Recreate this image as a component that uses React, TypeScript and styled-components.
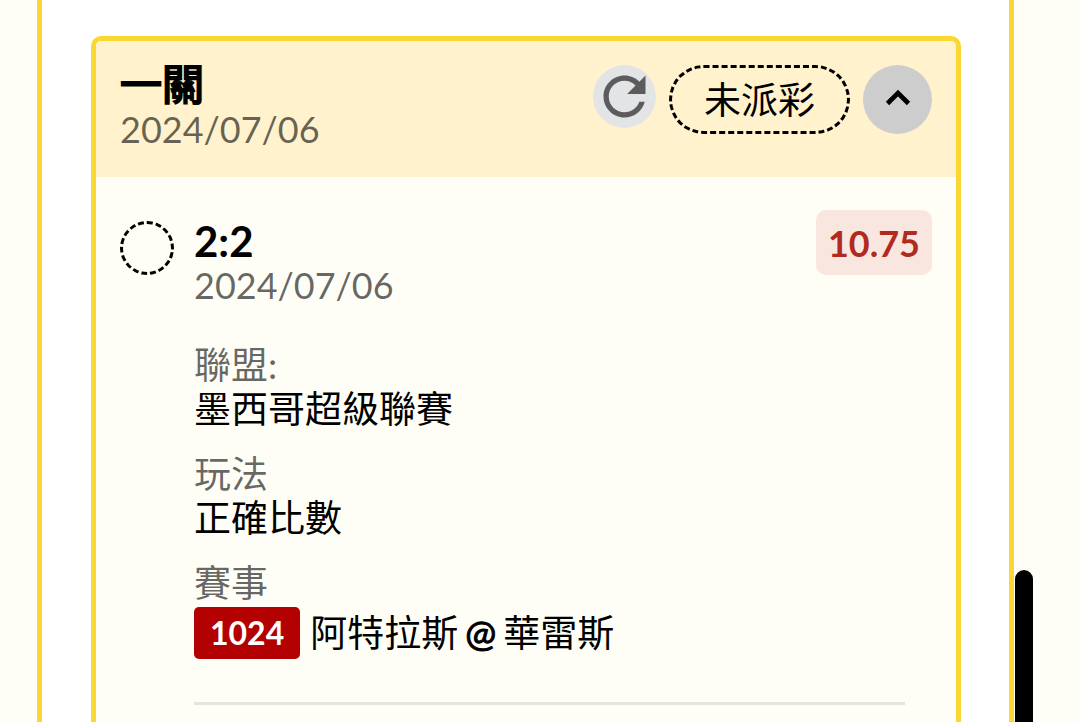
import React, { useState } from 'react';
import styled, { createGlobalStyle } from 'styled-components';

const GlobalStyle = createGlobalStyle`
  *, *::before, *::after { box-sizing: border-box; }
  body {
    margin: 0;
    background: #fffef6;
    color: #000;
    font-family: Lato, "Noto Sans CJK TC", sans-serif;
    font-size: 37px;
    line-height: 44px;
  }
`;

const Page = styled.div`
  display: flex;
  min-height: 100vh;
  padding: 0 66px 0 37px;
`;

const Panel = styled.main`
  display: flex;
  flex: 1;
  min-width: 0;
  padding: 36px 48px 0 49px;
  background: #fff;
  border: solid #fad733;
  border-width: 0 5px;
`;

const ScrollThumb = styled.div`
  position: fixed;
  right: 47px;
  top: 79%;
  bottom: 0;
  width: 18px;
  border-radius: 9px 9px 0 0;
  background: #000;
`;

const Card = styled.article`
  flex: 1;
  min-width: 0;
  background: #fffef6;
  border: 5px solid #fad733;
  border-bottom: 0;
  border-radius: 10px 10px 0 0;
`;

const CardHeader = styled.header`
  display: flex;
  justify-content: space-between;
  align-items: flex-start;
  padding: 22px 24px 26px;
  background: #fff2cc;
  border-radius: 5px 5px 0 0;
`;

const CardTitle = styled.h2`
  margin: 0;
  padding-bottom: 2px;
  font-size: 42px;
  line-height: 42px;
  font-weight: 400;
  -webkit-text-stroke: 2px #000;
`;

const Score = styled.h3`
  margin: 0;
  font-size: 42px;
  line-height: 44px;
  font-weight: 700;
`;

const DateText = styled.time`
  display: block;
  color: rgba(0, 0, 0, 0.6);
  font-size: 36px;
`;

const Actions = styled.div`
  display: flex;
  align-items: flex-start;
  gap: 13px;
  padding-top: 2px;
`;

const RoundButton = styled.button<{ $size: number; $tone: string }>`
  display: flex;
  align-items: center;
  justify-content: center;
  width: ${(p) => p.$size}px;
  height: ${(p) => p.$size}px;
  padding: 0;
  border: 0;
  border-radius: 50%;
  background: ${(p) => p.$tone};
  cursor: pointer;
`;

const StatusPill = styled.span`
  padding: 10px 32px;
  height: 69px;
  border: 3px dashed #000;
  border-radius: 35px;
  white-space: nowrap;
`;

const Bet = styled.section`
  display: grid;
  grid-template-columns: 54px 1fr auto;
  column-gap: 20px;
  align-items: start;
  padding: 33px 24px 0;
`;

const Marker = styled.span`
  width: 54px;
  height: 54px;
  margin-top: 11px;
  border: 3px dashed #000;
  border-radius: 50%;
`;

const Heading = styled.div`
  padding-top: 9px;
`;

const Odds = styled.strong`
  padding: 11px 12px 10px;
  border-radius: 10px;
  background: #f8e6df;
  color: #b02a20;
  font-size: 36px;
`;

const Details = styled.dl`
  grid-column: 2 / -1;
  display: flex;
  flex-direction: column;
  gap: 21px;
  margin: 36px 27px 0 0;
  padding-bottom: 41px;
  border-bottom: 3px solid #e6e4de;
`;

const Label = styled.dt`
  color: rgba(0, 0, 0, 0.6);
`;

const Value = styled.dd`
  display: flex;
  align-items: center;
  gap: 10px;
  margin: 0;
`;

const MatchCode = styled.span`
  padding: 4px 16px;
  margin: 2px 0;
  border-radius: 5px;
  background: #b30000;
  color: #fff;
  font-size: 32px;
  font-weight: 700;
`;

const Teams = styled.span`
  display: flex;
  gap: 7px;
`;

const At = styled.span`
  -webkit-text-stroke: 1px #000;
`;

const RefreshIcon = () => (
  <svg width="63" height="63" viewBox="0 0 24 24" aria-hidden="true">
    <path
      fill="#5c5c5c"
      d="M17.65 6.35C16.2 4.9 14.21 4 12 4c-4.42 0-7.99 3.58-7.99 8s3.57 8 7.99 8c3.73 0 6.84-2.55 7.73-6h-2.08c-.82 2.33-3.04 4-5.65 4-3.31 0-6-2.69-6-6s2.69-6 6-6c1.66 0 3.14.69 4.22 1.78L13 11h7V4l-2.35 2.35z"
    />
  </svg>
);

const ChevronIcon = () => (
  <svg width="28" height="24" viewBox="0 0 28 24" aria-hidden="true">
    <path d="M3.5 15.5 L14 5 L24.5 15.5" fill="none" stroke="#000" strokeWidth="4.6" />
  </svg>
);

export default function App() {
  const [open, setOpen] = useState(true);
  return (
    <Page>
      <GlobalStyle />
      <Panel>
        <Card>
          <CardHeader>
            <div>
              <CardTitle>一關</CardTitle>
              <DateText>2024/07/06</DateText>
            </div>
            <Actions>
              <RoundButton type="button" $size={63} $tone="#e3e4e6" aria-label="重新整理">
                <RefreshIcon />
              </RoundButton>
              <StatusPill>未派彩</StatusPill>
              <RoundButton
                type="button"
                $size={69}
                $tone="#cdcdcd"
                aria-label="收合"
                aria-expanded={open}
                onClick={() => setOpen(!open)}
              >
                <ChevronIcon />
              </RoundButton>
            </Actions>
          </CardHeader>
          {open && (
            <Bet>
              <Marker aria-hidden="true" />
              <Heading>
                <Score>2:2</Score>
                <DateText>2024/07/06</DateText>
              </Heading>
              <Odds>10.75</Odds>
              <Details>
                <div>
                  <Label>聯盟:</Label>
                  <Value>墨西哥超級聯賽</Value>
                </div>
                <div>
                  <Label>玩法</Label>
                  <Value>正確比數</Value>
                </div>
                <div>
                  <Label>賽事</Label>
                  <Value>
                    <MatchCode>1024</MatchCode>
                    <Teams>
                      <span>阿特拉斯</span>
                      <At>@</At>
                      <span>華雷斯</span>
                    </Teams>
                  </Value>
                </div>
              </Details>
            </Bet>
          )}
        </Card>
      </Panel>
      <ScrollThumb />
    </Page>
  );
}
